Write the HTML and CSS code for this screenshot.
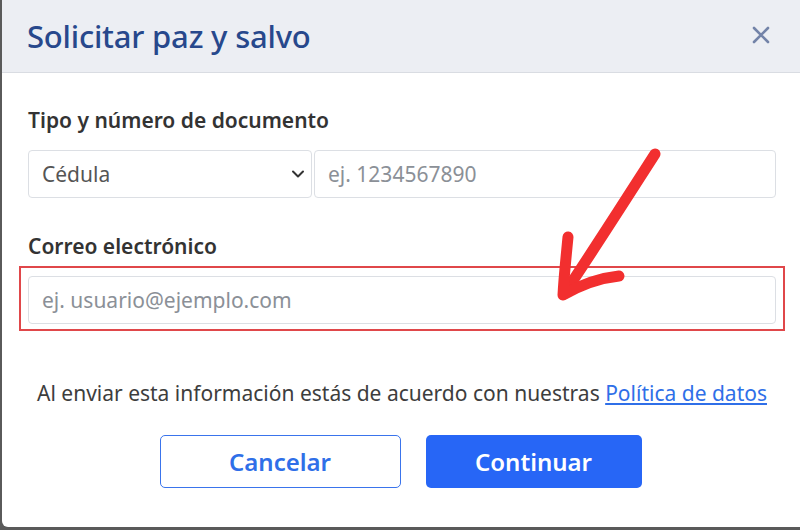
FILE: index.html
```html
<!DOCTYPE html>
<html lang="es">
<head>
<meta charset="utf-8">
<title>Solicitar paz y salvo</title>
<link rel="stylesheet" href="styles.css">
</head>
<body>
<div class="modal">
  <div class="modal-header">
    <h1 class="modal-title">Solicitar paz y salvo</h1>
    <button class="close" aria-label="Cerrar">
      <svg width="18" height="18" viewBox="0 0 18 18"><path d="M2 2L16 16M16 2L2 16" stroke="#7383a8" stroke-width="2.6" stroke-linecap="round"/></svg>
    </button>
  </div>
  <div class="modal-body">
    <label class="label">Tipo y número de documento</label>
    <div class="doc-row">
      <div class="select">
        <span>Cédula</span>
        <svg width="14" height="10" viewBox="0 0 14 10"><path d="M2 2.5L7 7.5L12 2.5" fill="none" stroke="#333" stroke-width="2" stroke-linecap="round" stroke-linejoin="round"/></svg>
      </div>
      <div class="input doc-input"><span class="ph">ej. 1234567890</span></div>
    </div>
    <label class="label label-mail">Correo electrónico</label>
    <div class="highlight">
      <div class="input"><span class="ph">ej. usuario@ejemplo.com</span></div>
    </div>
    <p class="terms">Al enviar esta información estás de acuerdo con nuestras <a href="#">Política de datos</a></p>
    <div class="actions">
      <button class="btn btn-outline">Cancelar</button>
      <button class="btn btn-primary">Continuar</button>
    </div>
  </div>
  <svg class="arrow" width="800" height="530" viewBox="0 0 800 530">
    <path d="M655 154 C628 196 595 248 564 294" fill="none" stroke="#f22f2f" stroke-width="11" stroke-linecap="round"/>
    <path d="M568 237 C566 258 564 276 563 295 C582 284 600 278 619 276" fill="none" stroke="#f22f2f" stroke-width="11" stroke-linecap="round" stroke-linejoin="round"/>
  </svg>
</div>
</body>
</html>
```

FILE: styles.css
```css
* { box-sizing: border-box; }
html, body { margin: 0; padding: 0; }
body {
  background: #5a5a5a;
  width: 800px;
  height: 530px;
  overflow: hidden;
  font-family: "Noto Sans", "Open Sans", sans-serif;
}
.modal {
  position: relative;
  margin-left: 2px;
  width: 798px;
  height: 527px;
  background: #fff;
  border-bottom-left-radius: 6px;
  overflow: hidden;
}
.modal-header {
  height: 73px;
  background: #eceef3;
  border-bottom: 1px solid #d9dce2;
  display: flex;
  align-items: center;
  justify-content: space-between;
  padding: 0 30px 0 25px;
}
.modal-title {
  margin: 0;
  font-size: 31px;
  font-weight: 500;
  color: #27488c;
  letter-spacing: -0.2px;
}
.close {
  border: 0;
  background: none;
  padding: 0;
  display: flex;
  margin-top: -2px;
}
.modal-body {
  padding: 33px 24px 0 26px;
  display: flex;
  flex-direction: column;
}
.label {
  font-size: 21px;
  font-weight: 600;
  color: #333;
  line-height: 28px;
  margin-bottom: 16px;
}
.label-mail { margin-top: 34px; margin-bottom: 6px; }
.doc-row { display: flex; gap: 2px; }
.select, .input {
  height: 48px;
  border: 1px solid #dcdfe4;
  border-radius: 4px;
  font-size: 21px;
  display: flex;
  align-items: center;
  padding: 0 13px;
  background: #fff;
}
.select {
  width: 284px;
  justify-content: space-between;
  color: #555;
  padding-right: 6px;
}
.doc-input { flex: 1; }
.ph { color: #8b9097; }
.highlight {
  margin: 0 -9px 0 -9px;
  border: 2px solid #e0474a;
  padding: 8px 7px 5px 7px;
}
.terms {
  margin: 48px 0 0 0;
  text-align: center;
  font-size: 21px;
  color: #3d3d3d;
  line-height: 28px;
}
.terms a { color: #2f6fe8; }
.actions {
  display: flex;
  justify-content: center;
  gap: 25px;
  margin-top: 28px;
  margin-left: -3px;
}
.btn {
  height: 53px;
  border-radius: 5px;
  font-family: inherit;
  font-size: 24px;
  font-weight: 600;
}
.btn-outline {
  width: 241px;
  background: #fff;
  color: #2f6fe8;
  border: 1px solid #3a74ec;
}
.btn-primary {
  width: 216px;
  background: #2766f6;
  color: #fff;
  border: 0;
}
.arrow {
  position: absolute;
  left: -2px;
  top: 0;
  pointer-events: none;
}
```
